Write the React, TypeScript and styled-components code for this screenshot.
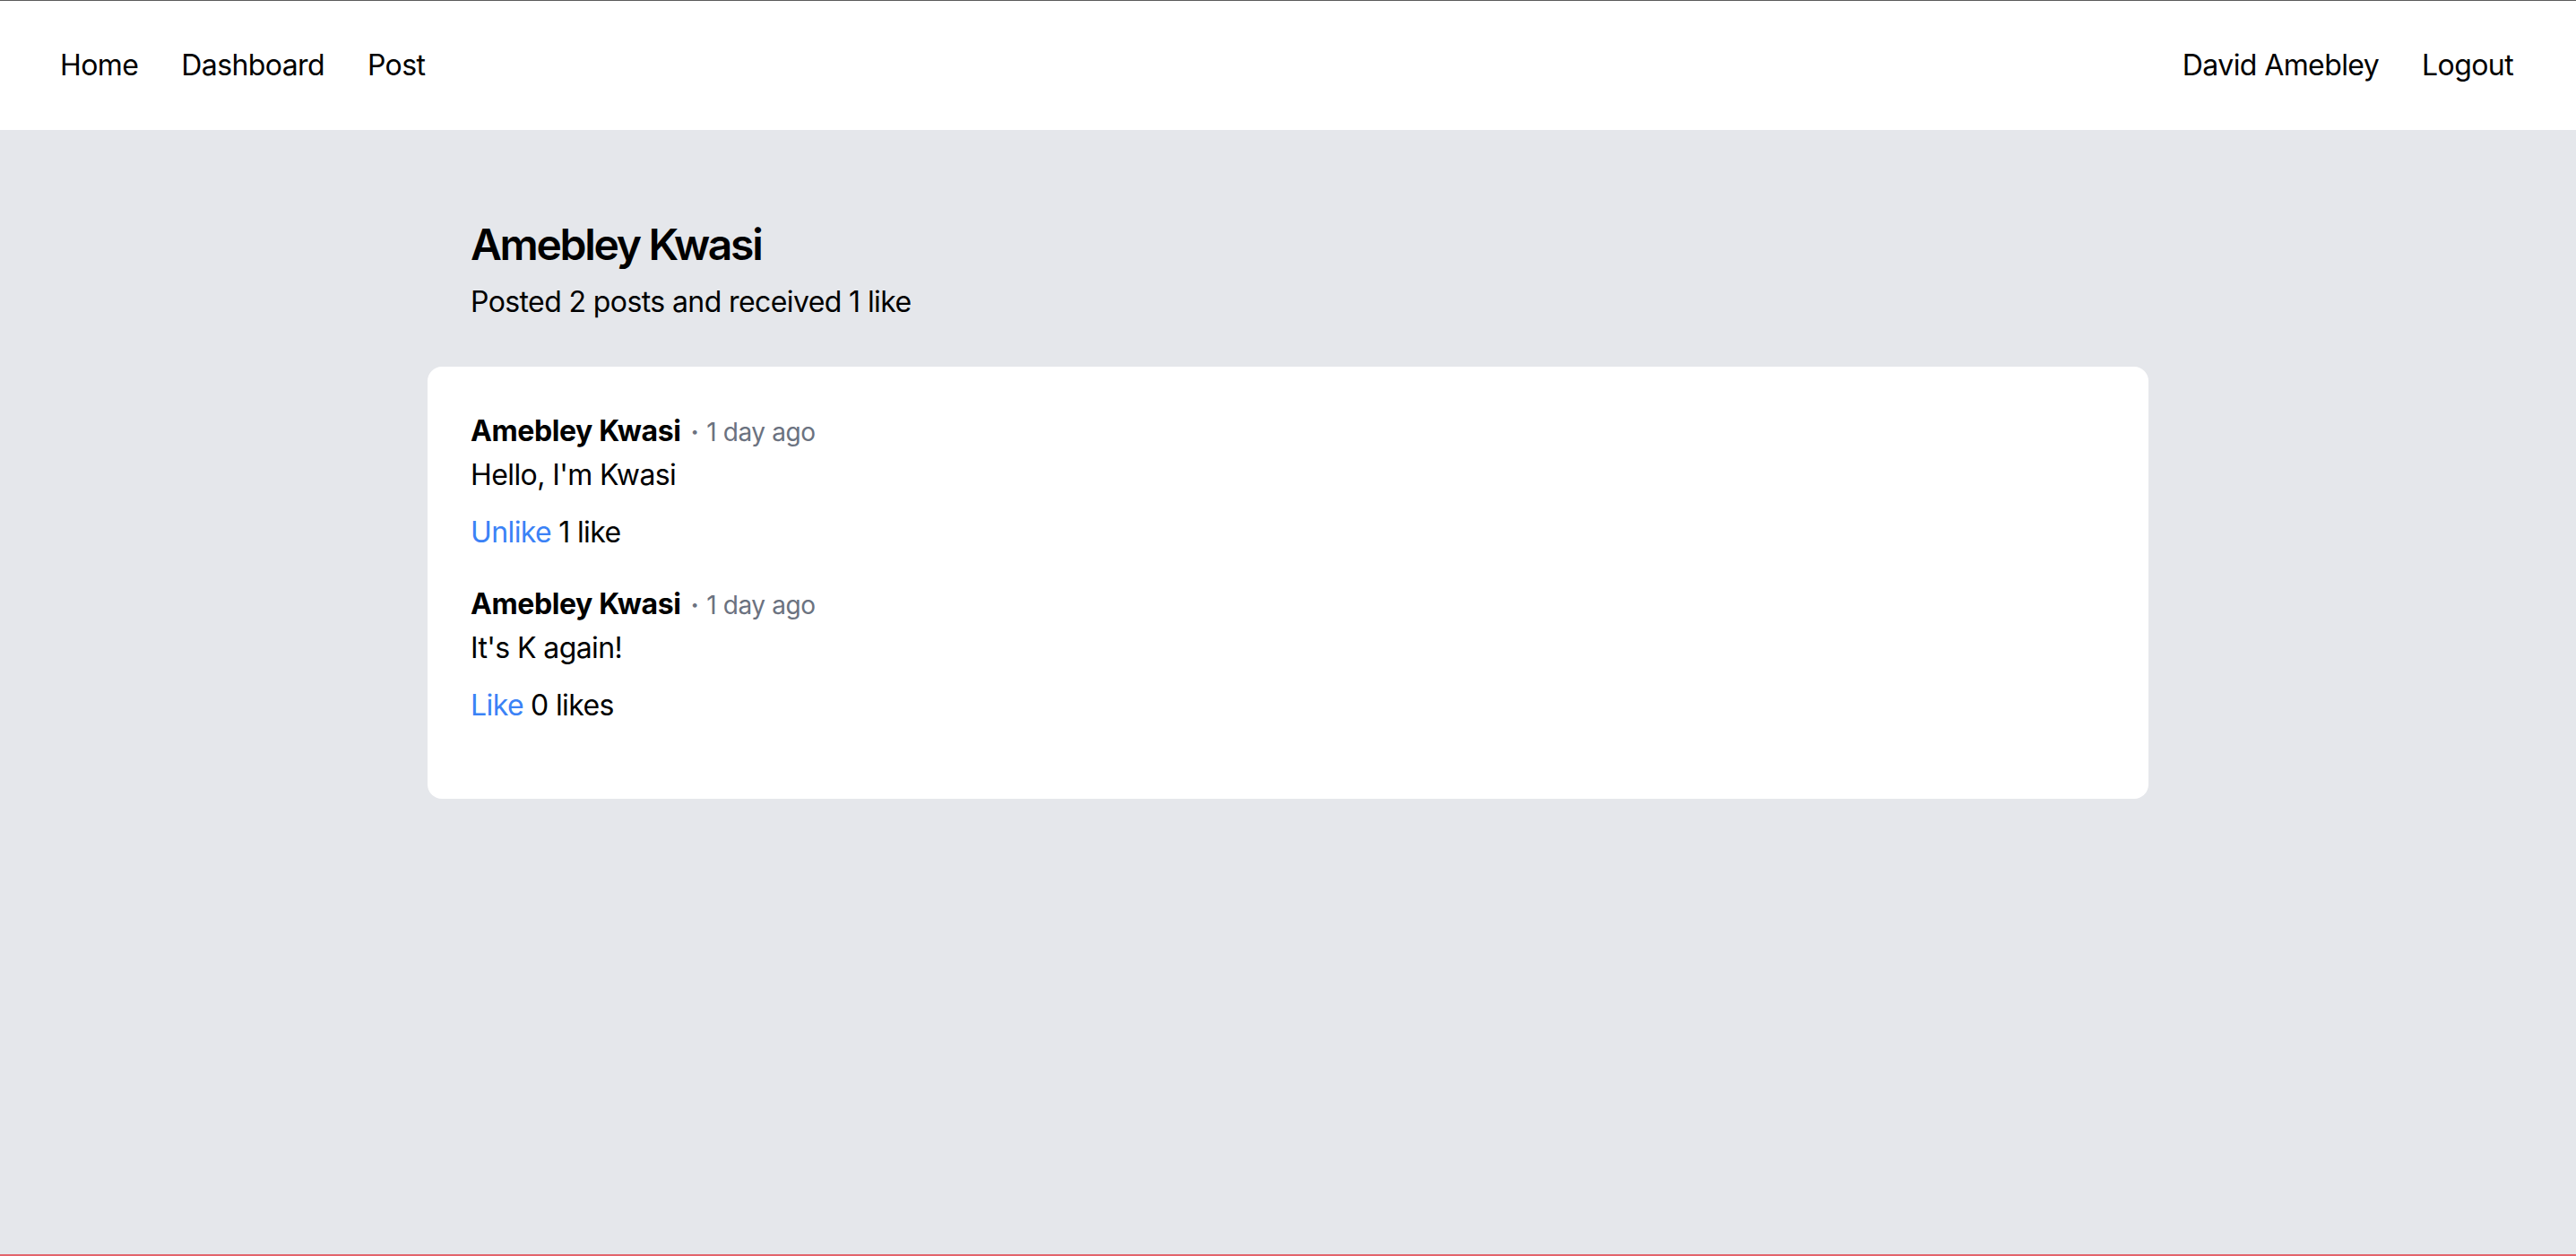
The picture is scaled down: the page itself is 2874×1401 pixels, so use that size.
import React from "react";
import styled, { createGlobalStyle } from "styled-components";

const GlobalStyle = createGlobalStyle`
  html, body {
    margin: 0;
    padding: 0;
    background: #e5e7eb;
    font-family: Inter, "Noto Sans", "Liberation Sans", sans-serif;
    color: #000;
    -webkit-font-smoothing: antialiased;
  }
  * { box-sizing: border-box; }
`;

const Page = styled.div`
  min-height: 100vh;
  display: flex;
  flex-direction: column;
  border-top: 1px solid #5c5c5c;
  border-bottom: 2px solid #e3646c;
  background: #e5e7eb;
  letter-spacing: -0.6px;
`;

const NavBar = styled.nav`
  height: 144px;
  background: #ffffff;
  display: flex;
  align-items: center;
  justify-content: space-between;
  padding: 0 70px 0 67px;
`;

const NavGroup = styled.div`
  display: flex;
  align-items: center;
  gap: 48px;
`;

const NavLink = styled.a`
  font-size: 32px;
  line-height: 48px;
  color: #000;
  text-decoration: none;
  cursor: pointer;
`;

const Main = styled.main`
  width: 100%;
  max-width: 1920px;
  margin: 0 auto;
  padding-top: 96px;
`;

const ProfileHeader = styled.header`
  padding: 0 48px;
  margin-bottom: 48px;
`;

const Title = styled.h1`
  margin: 0;
  font-size: 48px;
  line-height: 64px;
  font-weight: 600;
  letter-spacing: -2.3px;
`;

const Subtitle = styled.p`
  margin: 8px 0 0;
  font-size: 32px;
  line-height: 48px;
`;

const Card = styled.section`
  background: #ffffff;
  border-radius: 16px;
  padding: 48px;
`;

const Post = styled.article`
  margin-bottom: 32px;
`;

const PostMeta = styled.div`
  font-size: 32px;
  line-height: 48px;
`;

const Author = styled.span`
  font-weight: 700;
  letter-spacing: -0.4px;
`;

const Separator = styled.span`
  font-size: 28px;
  font-weight: 700;
  color: #6b7280;
  margin: 0 9px 0 11px;
`;

const Time = styled.span`
  font-size: 28px;
  color: #6b7280;
  letter-spacing: -0.4px;
`;

const Body = styled.p`
  margin: 0;
  font-size: 32px;
  line-height: 48px;
`;

const Actions = styled.div`
  margin-top: 16px;
  font-size: 32px;
  line-height: 48px;
`;

const LikeButton = styled.button`
  background: none;
  border: none;
  padding: 0;
  font: inherit;
  letter-spacing: inherit;
  color: #3b82f6;
  cursor: pointer;
  margin-right: 8px;
`;

const posts = [
  { body: "Hello, I'm Kwasi", liked: true, likes: 1 },
  { body: "It's K again!", liked: false, likes: 0 },
];

export default function App() {
  return (
    <>
      <GlobalStyle />
      <Page>
        <NavBar>
          <NavGroup>
            <NavLink>Home</NavLink>
            <NavLink>Dashboard</NavLink>
            <NavLink>Post</NavLink>
          </NavGroup>
          <NavGroup>
            <NavLink>David Amebley</NavLink>
            <NavLink>Logout</NavLink>
          </NavGroup>
        </NavBar>
        <Main>
          <ProfileHeader>
            <Title>Amebley Kwasi</Title>
            <Subtitle>Posted 2 posts and received 1 like</Subtitle>
          </ProfileHeader>
          <Card>
            {posts.map((p, i) => (
              <Post key={i}>
                <PostMeta>
                  <Author>Amebley Kwasi</Author>
                  <Separator>·</Separator>
                  <Time>1 day ago</Time>
                </PostMeta>
                <Body>{p.body}</Body>
                <Actions>
                  <LikeButton>{p.liked ? "Unlike" : "Like"}</LikeButton>
                  {p.likes} {p.likes === 1 ? "like" : "likes"}
                </Actions>
              </Post>
            ))}
          </Card>
        </Main>
      </Page>
    </>
  );
}
